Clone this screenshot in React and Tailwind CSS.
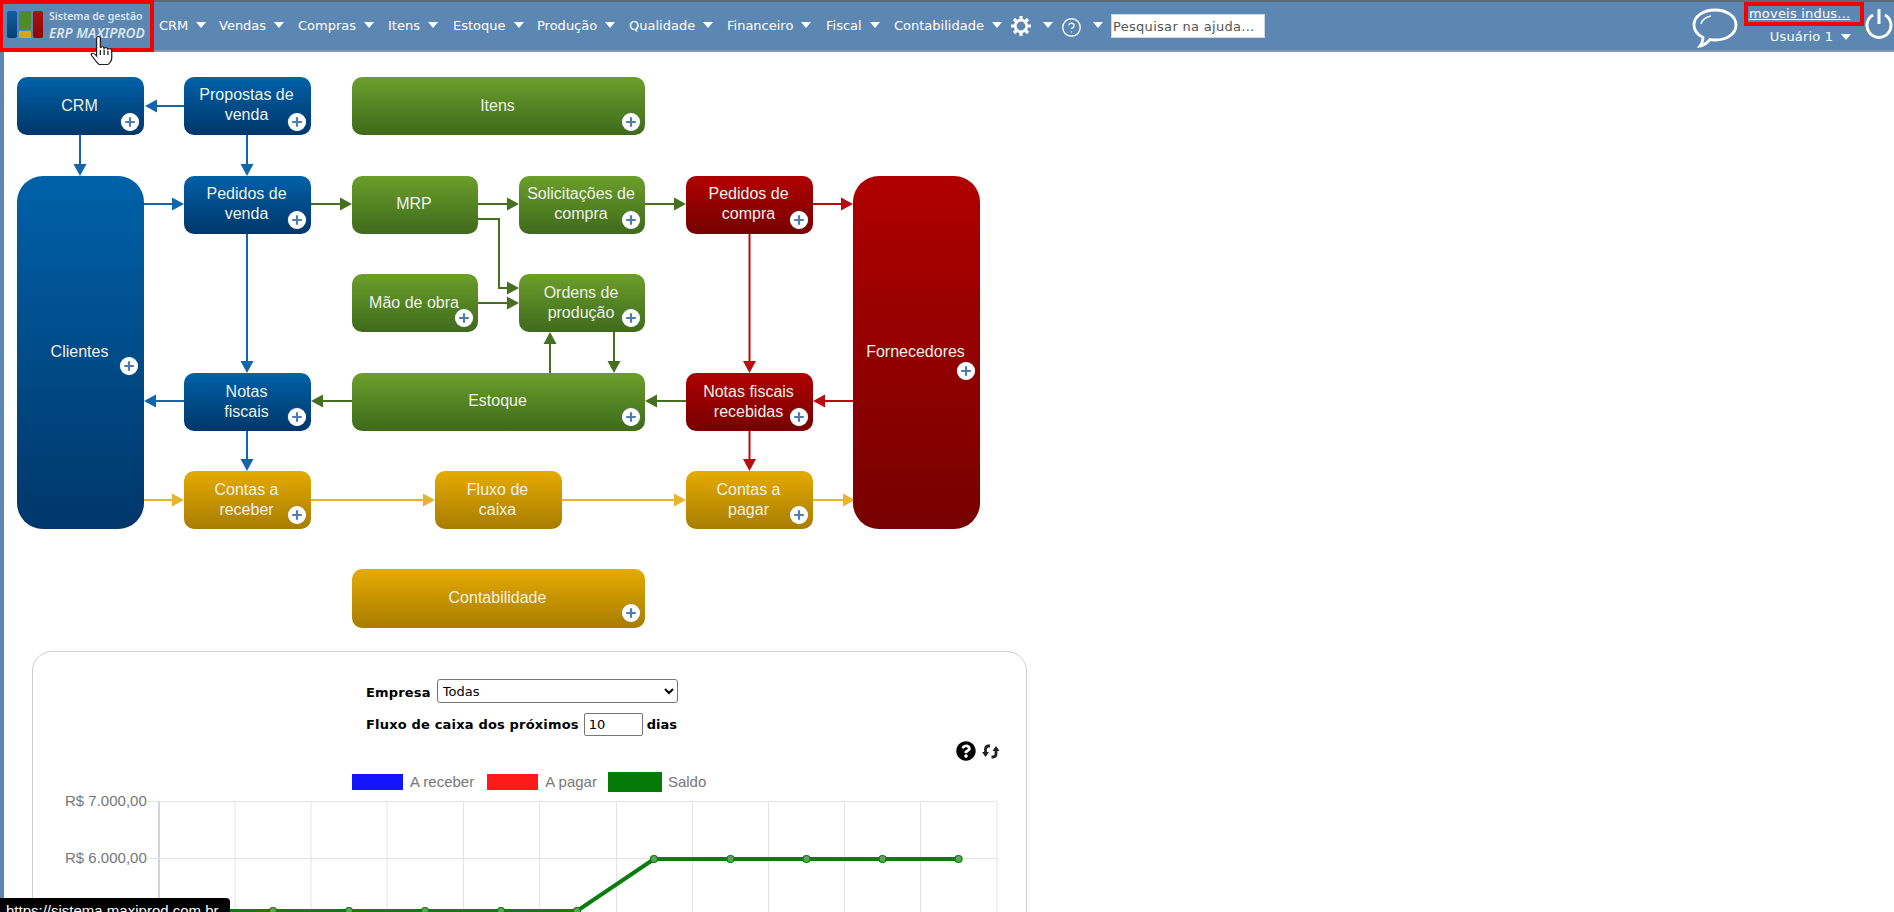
import React from "react";
import { CircleHelp } from "lucide-react";
import { FaQuestionCircle } from "react-icons/fa";

const OX = 4, OY = 52;
const grads = {
  blue: "bg-gradient-to-b from-[#0061a9] to-[#00376a]",
  green: "bg-gradient-to-b from-[#6b9f2b] to-[#3f6a1c]",
  red: "bg-gradient-to-b from-[#b00000] to-[#770000]",
  gold: "bg-gradient-to-b from-[#e6ab00] to-[#a87c00]",
};

const nodes = [
  { t: ["CRM"], c: "blue", x: 17, y: 77, w: 127, h: 58, p: [130, 122], ty: 106 },
  { t: ["Propostas de", "venda"], c: "blue", x: 184, y: 77, w: 127, h: 58, p: [297, 122], ty: 95 },
  { t: ["Itens"], c: "green", x: 352, y: 77, w: 293, h: 58, p: [631, 122], ty: 106 },
  { t: ["Clientes"], c: "blue", x: 17, y: 176, w: 127, h: 353, p: [129, 366], ty: 352, big: 1 },
  { t: ["Pedidos de", "venda"], c: "blue", x: 184, y: 176, w: 127, h: 58, p: [297, 220], ty: 194 },
  { t: ["MRP"], c: "green", x: 352, y: 176, w: 126, h: 58, ty: 204 },
  { t: ["Solicitações de", "compra"], c: "green", x: 519, y: 176, w: 126, h: 58, p: [631, 220], ty: 194 },
  { t: ["Pedidos de", "compra"], c: "red", x: 686, y: 176, w: 127, h: 58, p: [799, 220], ty: 194 },
  { t: ["Fornecedores"], c: "red", x: 853, y: 176, w: 127, h: 353, p: [966, 371], ty: 352, big: 1 },
  { t: ["Mão de obra"], c: "green", x: 352, y: 274, w: 126, h: 58, p: [464, 318], ty: 303 },
  { t: ["Ordens de", "produção"], c: "green", x: 519, y: 274, w: 126, h: 58, p: [631, 318], ty: 293 },
  { t: ["Notas", "fiscais"], c: "blue", x: 184, y: 373, w: 127, h: 58, p: [297, 417], ty: 392 },
  { t: ["Estoque"], c: "green", x: 352, y: 373, w: 293, h: 58, p: [631, 417], ty: 401 },
  { t: ["Notas fiscais", "recebidas"], c: "red", x: 686, y: 373, w: 127, h: 58, p: [799, 417], ty: 392 },
  { t: ["Contas a", "receber"], c: "gold", x: 184, y: 471, w: 127, h: 58, p: [297, 515], ty: 490 },
  { t: ["Fluxo de", "caixa"], c: "gold", x: 435, y: 471, w: 127, h: 58, ty: 490 },
  { t: ["Contas a", "pagar"], c: "gold", x: 686, y: 471, w: 127, h: 58, p: [799, 515], ty: 490 },
  { t: ["Contabilidade"], c: "gold", x: 352, y: 569, w: 293, h: 59, p: [631, 613], ty: 598 },
];

const B = "#1466aa", G = "#476f20", R = "#b80b12", Y = "#e9b32f";
const arrows = [
  [B, [[184, 106], [145, 106]]],
  [B, [[80, 135], [80, 176]]],
  [B, [[247, 135], [247, 176]]],
  [B, [[144, 204], [184, 204]]],
  [G, [[311, 204], [352, 204]]],
  [G, [[478, 204], [519, 204]]],
  [G, [[645, 204], [686, 204]]],
  [R, [[813, 204], [853, 204]]],
  [G, [[478, 219], [499, 219], [499, 288], [519, 288]]],
  [G, [[478, 303], [519, 303]]],
  [B, [[247, 234], [247, 373]]],
  [G, [[550, 373], [550, 332]]],
  [G, [[614, 332], [614, 373]]],
  [B, [[184, 401], [144, 401]]],
  [G, [[352, 401], [311, 401]]],
  [G, [[686, 401], [645, 401]]],
  [R, [[853, 401], [813, 401]]],
  [R, [[749.5, 234], [749.5, 373]]],
  [R, [[749.5, 431], [749.5, 471]]],
  [B, [[247, 431], [247, 471]]],
  [Y, [[144, 500], [184, 500]]],
  [Y, [[311, 500], [435, 500]]],
  [Y, [[562, 500], [686, 500]]],
  [Y, [[813, 500], [855, 500]]],
];

function Arrow({ color, pts }) {
  const [a, b] = pts.slice(-2);
  const dx = Math.sign(b[0] - a[0]), dy = Math.sign(b[1] - a[1]);
  const L = 12, W = 6.5;
  const base = [b[0] - dx * L, b[1] - dy * L];
  const head = [b, [base[0] - dy * W, base[1] - dx * W], [base[0] + dy * W, base[1] + dx * W]];
  const line = [...pts.slice(0, -1), base];
  return (
    <g>
      <polyline points={line.map((p) => p.join(",")).join(" ")} fill="none" stroke={color} strokeWidth="2" />
      <polygon points={head.map((p) => p.join(",")).join(" ")} fill={color} />
    </g>
  );
}

function Plus({ x, y }) {
  return (
    <span
      className="absolute flex h-[18px] w-[18px] items-center justify-center rounded-full bg-white shadow-[0_0_1px_#7f9fc0]"
      style={{ left: x - OX - 9, top: y - OY - 9 }}
    >
      <svg width="12" height="12" viewBox="0 0 12 12">
        <path d="M6 1.2v9.6M1.2 6h9.6" stroke="#4f7cae" strokeWidth="2.2" />
      </svg>
    </span>
  );
}

function Node({ n }) {
  return (
    <>
      <div
        className={`absolute ${grads[n.c]} ${n.big ? "rounded-[26px]" : "rounded-[10px]"}`}
        style={{ left: n.x - OX, top: n.y - OY, width: n.w, height: n.h }}
      />
      <div
        className="absolute flex flex-col items-center text-center font-['Liberation_Sans',sans-serif] text-[16px] leading-[20px] text-[#eef2ea]"
        style={{ left: n.x - OX - 1, top: n.ty - 10 - OY, width: n.w }}
      >
        {n.t.map((l) => (
          <span key={l} className="whitespace-nowrap">{l}</span>
        ))}
      </div>
      {n.p && <Plus x={n.p[0]} y={n.p[1]} />}
    </>
  );
}

const Caret = ({ className = "" }) => (
  <span className={`inline-block h-0 w-0 border-x-[5px] border-t-[6px] border-x-transparent border-t-white ${className}`} />
);

const menu = [
  ["CRM", "w-[60px]"],
  ["Vendas", "w-[79px]"],
  ["Compras", "w-[90px]"],
  ["Itens", "w-[65px]"],
  ["Estoque", "w-[84px]"],
  ["Produção", "w-[92px]"],
  ["Qualidade", "w-[98px]"],
  ["Financeiro", "w-[99px]"],
  ["Fiscal", "w-[68px]"],
  ["Contabilidade", "w-[117px]"],
];

function Logo() {
  return (
    <div className="relative flex h-[52px] w-[154px] shrink-0 items-center border-[4px] border-l-[3px] border-[#f40000] pl-[4px]">
      <div className="flex gap-[2px] self-start pt-[7px]">
        <div className="h-[27px] w-[10px] rounded-[2px] bg-gradient-to-b from-[#0d5fa5] to-[#0b3f74]" />
        <div className="flex w-[12px] flex-col gap-[1px]">
          <div className="h-[19px] rounded-[1px] bg-[#4d8c2a]" />
          <div className="h-[7px] rounded-[1px] bg-[#dda412]" />
        </div>
        <div className="h-[27px] w-[10px] rounded-[2px] bg-gradient-to-b from-[#b20f0f] to-[#8a0606]" />
      </div>
      <div className="ml-[6px] flex flex-col pb-[2px] font-['Noto_Sans',sans-serif] text-[#dbe6ef]">
        <span className="whitespace-nowrap text-[10.5px] font-semibold leading-[14px]">Sistema de gestão</span>
        <span className="mt-[2px] whitespace-nowrap text-[13.7px] font-semibold italic leading-[16px]">ERP MAXIPROD</span>
      </div>
      <svg className="absolute left-[86px] top-[32px] z-10" width="24" height="30" viewBox="0 0 19 30" preserveAspectRatio="none">
        <path
          d="M6 2c0-2 3-2 3 0v10c1-2 3-1.500 3 .5 1-1.500 3-1 3 .8 1-1.200 3-.6 3 1.200v7c0 3-1 5-3 7H8c-2-2-4-6-6-9-1-2 1-3.500 3-1l1 1.500z"
          fill="#fff"
          stroke="#222"
          strokeWidth="1"
        />
        <path d="M9 14v5M12 14v5M15 15v4" stroke="#222" strokeWidth="1" />
      </svg>
    </div>
  );
}

function Header() {
  return (
    <header className="flex h-[52px] w-full items-stretch border-t-2 border-b-2 border-t-[#5b6b7c] border-b-[#8c98a5] bg-[#5c87b2] font-['DejaVu_Sans',sans-serif] text-[13px] text-white">
      <div className="-my-[2px] flex"><Logo /></div>
      <nav className="ml-[5px] flex items-center">
        {menu.map(([m, w]) => (
          <div key={m} className={`flex items-center ${w}`}>
            <span className="whitespace-nowrap">{m}</span>
            <Caret className="mb-[2px] ml-[8px]" />
          </div>
        ))}
        <svg width="20" height="20" viewBox="0 0 20 20">
          <circle cx="10" cy="10" r="5.800" fill="none" stroke="#fff" strokeWidth="2.800" />
          <g stroke="#fff" strokeWidth="3.200">
            <path d="M10 0v4M10 16v4M0 10h4M16 10h4M3 3l2.800 2.800M14.200 14.200L17 17M17 3l-2.800 2.800M5.800 14.200L3 17" />
          </g>
        </svg>
        <Caret className="mb-[2px] ml-[12px]" />
        <CircleHelp className="ml-[8px] mt-[2px]" size={21} strokeWidth={1.500} color="#fff" />
        <Caret className="mb-[2px] ml-[11px]" />
        <input
          readOnly
          value="Pesquisar na ajuda..."
          className="ml-[8px] h-[24px] w-[154px] border border-[#ccd8e4] bg-white pl-[1px] text-[13px] tracking-[0.3px] text-[#555] outline-none"
        />
      </nav>
      <div className="ml-auto flex items-stretch">
        <svg className="mr-[1px] mt-[5px]" width="46" height="42" viewBox="0 0 46 42">
          <path
            d="M23 3c11.500 0 21 6 21 15s-9.500 15-21 15c-2 0-3.500 0-5-.5C15 36 12 38.500 8 39c2-2.500 3-5 3-8.500C5 27.500 2 23 2 18 2 9 11.500 3 23 3z"
            fill="none"
            stroke="#fff"
            strokeWidth="2.800"
          />
          <path d="M9 17c1-4 5-7 10-8" fill="none" stroke="#fff" strokeWidth="1.500" />
        </svg>
        <div className="ml-[5px] flex w-[120px] flex-col items-center">
          <div className="flex h-[24px] w-[120px] items-center border-[4px] border-[#f40000] pl-[1px] text-[13px]">
            <span className="whitespace-nowrap underline tracking-[0.2px]">moveis indus...</span>
          </div>
          <div className="mt-[1px] flex items-center pl-[13px] text-[13px]">
            <span className="tracking-[0.2px]">Usuário 1</span>
            <Caret className="ml-[8px]" />
          </div>
        </div>
        <svg className="ml-[1px] mr-[1px] mt-[5px]" width="28" height="34" viewBox="0 0 28 34">
          <path d="M8 8a12 12 0 1 0 12 0" fill="none" stroke="#fff" strokeWidth="3" />
          <path d="M14 2v15" stroke="#fff" strokeWidth="3" />
        </svg>
      </div>
    </header>
  );
}

function Diagram() {
  return (
    <div className="relative h-[599px] w-[1000px]">
      <svg className="absolute left-0 top-0" width="1000" height="599" viewBox={`${OX} ${OY} 1000 599`}>
        {arrows.map(([c, p], i) => (
          <Arrow key={i} color={c} pts={p} />
        ))}
      </svg>
      {nodes.map((n) => (
        <Node key={n.t.join()} n={n} />
      ))}
    </div>
  );
}

function Chart() {
  const xs = [159, 235, 311, 387, 463.500, 539.500, 616.500, 692.500, 768.500, 844.500, 920.500, 997];
  const pts = [[197, 911], [273, 911], [349, 911], [425, 911], [501, 911], [577, 911], [654, 859], [730.500, 859], [806.500, 859], [882.500, 859], [958.500, 859]];
  return (
    <svg className="absolute left-0 top-0" width="1000" height="140" viewBox="4 790 1000 140">
      {xs.map((x, i) => (
        <line key={x} x1={x} x2={x} y1="801.500" y2="930" stroke={i === 0 ? "#a8a8a8" : "#e3e3e3"} />
      ))}
      {[801.500, 858.500, 915].map((y) => (
        <line key={y} x1="147" x2="997" y1={y} y2={y} stroke="#e3e3e3" />
      ))}
      <polyline points={pts.map((p) => p.join(",")).join(" ")} fill="none" stroke="#0a7d0a" strokeWidth="4" />
      {pts.map((p) => (
        <circle key={p[0]} cx={p[0]} cy={p[1]} r="3.500" fill="#5aa55a" stroke="#0a7d0a" strokeWidth="1.200" />
      ))}
    </svg>
  );
}

function Card() {
  const LegendBox = ({ cls }) => <span className={`block ${cls}`} />;
  return (
    <section className="relative ml-[28px] h-[400px] w-[995px] rounded-[20px] border border-[#cfcfcf] font-['DejaVu_Sans',sans-serif] text-[13px] text-black">
      <div className="flex flex-col pl-[333px] pt-[27px]">
        <div className="flex h-[24px] items-center">
          <span className="pt-[3px] font-bold tracking-[0.18px]">Empresa</span>
          <select className="ml-[6px] h-[24px] w-[241px] rounded-[3px] border border-[#767676] bg-white pl-[1px] text-[13px]" defaultValue="Todas">
            <option>Todas</option>
          </select>
        </div>
        <div className="mt-[10px] flex h-[23px] items-center">
          <span className="font-bold tracking-[0.18px]">Fluxo de caixa dos próximos</span>
          <input readOnly value="10" className="ml-[5px] h-[23px] w-[59px] rounded-[2px] border border-[#767676] pl-[4px] text-[13px]" />
          <span className="ml-[4px] font-bold">dias</span>
        </div>
      </div>
      <div className="mt-[5px] flex items-center justify-end gap-[6px] pr-[26px]">
        <FaQuestionCircle size={20} color="#000" />
        <svg width="18" height="15" viewBox="0 0 18 15">
          <path d="M3.500 11V5c0-2 1-3 3-3H8M14 4v6c0 2-1 3-3 3H9.500" fill="none" stroke="#222" strokeWidth="2.800" />
          <path d="M0 8l3.500 5L7 8zM10.500 7L14 2l3.500 5z" fill="#222" />
        </svg>
      </div>
      <div className="ml-[319px] mt-[11px] flex h-[20px] items-center font-['Liberation_Sans',sans-serif] text-[15px] text-[#777]">
        <LegendBox cls="h-[16px] w-[51px] bg-[#1414ff]" />
        <span className="ml-[7px]">A receber</span>
        <LegendBox cls="ml-[13px] h-[16px] w-[51px] bg-[#ff1a1a]" />
        <span className="ml-[7px]">A pagar</span>
        <LegendBox cls="ml-[11px] h-[20px] w-[54px] bg-[#067a06]" />
        <span className="ml-[6px]">Saldo</span>
      </div>
    </section>
  );
}

export default function App() {
  return (
    <div className="relative h-[912px] w-[1894px] overflow-hidden bg-white">
      <Header />
      <div className="flex">
        <div className="h-[860px] w-[4px] shrink-0 bg-[#5c87b2]" />
        <main className="relative flex-1">
          <Diagram />
          <Card />
          <div className="absolute left-0 top-[738px] h-[140px] w-[1000px]">
            <div className="relative h-full w-full">
              <Chart />
              <div className="absolute left-[61px] top-[1px] font-['Liberation_Sans',sans-serif] text-[15px] leading-[20px] text-[#777]">R$ 7.000,00</div>
              <div className="absolute left-[61px] top-[58px] font-['Liberation_Sans',sans-serif] text-[15px] leading-[20px] text-[#777]">R$ 6.000,00</div>
            </div>
          </div>
        </main>
      </div>
      <div className="absolute bottom-0 left-0 h-[14px] w-[230px] overflow-hidden rounded-tr-[4px] bg-black pl-[6px] pt-[4px] font-['Liberation_Sans',sans-serif] text-[15px] leading-[17px] text-white">
        https://sistema.maxiprod.com.br
      </div>
    </div>
  );
}
